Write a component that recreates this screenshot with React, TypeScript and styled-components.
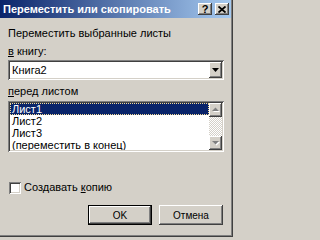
import styled, { createGlobalStyle } from 'styled-components';

const GlobalStyle = createGlobalStyle`
  html, body {
    margin: 0;
    padding: 0;
    overflow: hidden;
    background: #d4d0c8;
  }
`;

const raised = `
  box-shadow: inset -1px -1px #404040, inset 1px 1px #ffffff,
    inset -2px -2px #808080, inset 2px 2px #d4d0c8;
`;

const sunken = `
  box-shadow: inset 1px 1px #808080, inset -1px -1px #ffffff,
    inset 2px 2px #404040, inset -2px -2px #d4d0c8;
`;

const Window = styled.div`
  width: 233px;
  height: 237px;
  box-sizing: border-box;
  background: #d4d0c8;
  box-shadow: inset -1px -1px #404040, inset -2px -2px #808080;
  font-family: 'Liberation Sans', Arial, sans-serif;
  font-size: 11px;
  color: #000;
  display: flex;
  flex-direction: column;
`;

const TitleBar = styled.div`
  height: 18px;
  margin-right: 2px;
  padding: 0 2px 0 3px;
  display: flex;
  align-items: center;
  background: linear-gradient(to right, #0a246a, #a6caf0);
`;

const Title = styled.div`
  flex: 1;
  color: #fff;
  font-weight: bold;
  font-size: 11px;
  white-space: nowrap;
`;

const TitleButtons = styled.div`
  display: flex;
  gap: 3px;
`;

const TitleButton = styled.div`
  width: 14px;
  height: 12px;
  background: #d4d0c8;
  ${raised}
  display: flex;
  align-items: center;
  justify-content: center;
  font-weight: bold;
  font-size: 11px;
  line-height: 12px;
`;

const Body = styled.div`
  flex: 1;
  display: flex;
  flex-direction: column;
  padding: 0 9px 0 8px;
`;

const Label = styled.div<{ $top: number }>`
  margin-top: ${({ $top }) => $top}px;
  line-height: 13px;
  white-space: nowrap;
`;

const Key = styled.span`
  text-decoration: underline;
`;

const Combo = styled.div`
  margin-top: 2px;
  height: 20px;
  background: #fff;
  ${sunken}
  display: flex;
  align-items: center;
  padding: 2px 2px 2px 4px;
  box-sizing: border-box;
`;

const ComboText = styled.div`
  flex: 1;
`;

const ArrowButton = styled.div<{ $h: number }>`
  width: 13px;
  height: ${({ $h }) => $h}px;
  background: #d4d0c8;
  ${raised}
  display: flex;
  align-items: center;
  justify-content: center;
  flex-shrink: 0;
`;

const ListBox = styled.div`
  margin-top: 3px;
  height: 51px;
  background: #fff;
  ${sunken}
  box-sizing: border-box;
  padding: 2px;
  display: flex;
  overflow: hidden;
`;

const Items = styled.div`
  flex: 1;
  overflow: hidden;
`;

const Item = styled.div<{ $selected?: boolean }>`
  height: 12px;
  line-height: 10px;
  padding-left: 1px;
  white-space: nowrap;
  box-sizing: border-box;
  background: ${({ $selected }) => ($selected ? '#0a246a' : 'transparent')};
  color: ${({ $selected }) => ($selected ? '#fff' : '#000')};
  border: 1px ${({ $selected }) => ($selected ? 'dotted #f5db95' : 'solid transparent')};
`;

const ScrollBar = styled.div`
  width: 13px;
  display: flex;
  flex-direction: column;
`;

const Track = styled.div`
  flex: 1;
  background: repeating-conic-gradient(#d4d0c8 0 25%, #ffffff 0 50%) 0 0 / 2px 2px;
`;

const CheckRow = styled.label`
  margin-top: 29px;
  display: flex;
  align-items: center;
  gap: 3px;
  padding-left: 1px;
  line-height: 13px;
`;

const CheckBox = styled.div`
  width: 12px;
  height: 12px;
  background: #fff;
  ${sunken}
`;

const Buttons = styled.div`
  margin-top: 11px;
  display: flex;
  justify-content: flex-end;
  gap: 7px;
  padding-right: 1px;
`;

const Button = styled.div<{ $default?: boolean }>`
  width: 64px;
  height: 20px;
  display: flex;
  align-items: center;
  justify-content: center;
  font-size: 10px;
  background: #d4d0c8;
  box-shadow: ${({ $default }) =>
    $default
      ? 'inset 0 0 0 1px #000, inset -2px -2px #404040, inset 2px 2px #fff, inset -3px -3px #808080'
      : 'inset -1px -1px #404040, inset 1px 1px #fff, inset -2px -2px #808080, inset 2px 2px #d4d0c8'};
`;

function DownArrow({ color = '#000' }: { color?: string }) {
  return (
    <svg width="7" height="4" viewBox="0 0 7 4">
      <path d="M0 0h7L3.5 4z" fill={color} />
    </svg>
  );
}

function GreyArrow({ up }: { up?: boolean }) {
  const d = up ? 'M1 4h7L4.5 0.5z' : 'M1 1h7L4.5 4.5z';
  return (
    <svg width="9" height="6" viewBox="0 0 9 6">
      <path d={d} fill="#fff" transform="translate(1 1)" />
      <path d={d} fill="#808080" />
    </svg>
  );
}

function CloseGlyph() {
  return (
    <svg width="8" height="7" viewBox="0 0 8 7">
      <path d="M0.5 0.5L7.5 6.5M7.5 0.5L0.5 6.5" stroke="#000" strokeWidth="1.8" />
    </svg>
  );
}

export default function App() {
  return (
    <Window>
      <GlobalStyle />
      <TitleBar>
        <Title>Переместить или скопировать</Title>
        <TitleButtons>
          <TitleButton>?</TitleButton>
          <TitleButton>
            <CloseGlyph />
          </TitleButton>
        </TitleButtons>
      </TitleBar>
      <Body>
        <Label $top={9}>Переместить выбранные листы</Label>
        <Label $top={5}>
          <Key>в</Key> книгу:
        </Label>
        <Combo>
          <ComboText>Книга2</ComboText>
          <ArrowButton $h={16}>
            <DownArrow />
          </ArrowButton>
        </Combo>
        <Label $top={5}>
          <Key>п</Key>еред листом
        </Label>
        <ListBox>
          <Items>
            <Item $selected>Лист1</Item>
            <Item>Лист2</Item>
            <Item>Лист3</Item>
            <Item>(переместить в конец)</Item>
          </Items>
          <ScrollBar>
            <ArrowButton $h={14}>
              <GreyArrow up />
            </ArrowButton>
            <Track />
            <ArrowButton $h={14}>
              <GreyArrow />
            </ArrowButton>
          </ScrollBar>
        </ListBox>
        <CheckRow>
          <CheckBox />
          <span>
            Создавать <Key>к</Key>опию
          </span>
        </CheckRow>
        <Buttons>
          <Button $default>OK</Button>
          <Button>Отмена</Button>
        </Buttons>
      </Body>
    </Window>
  );
}
